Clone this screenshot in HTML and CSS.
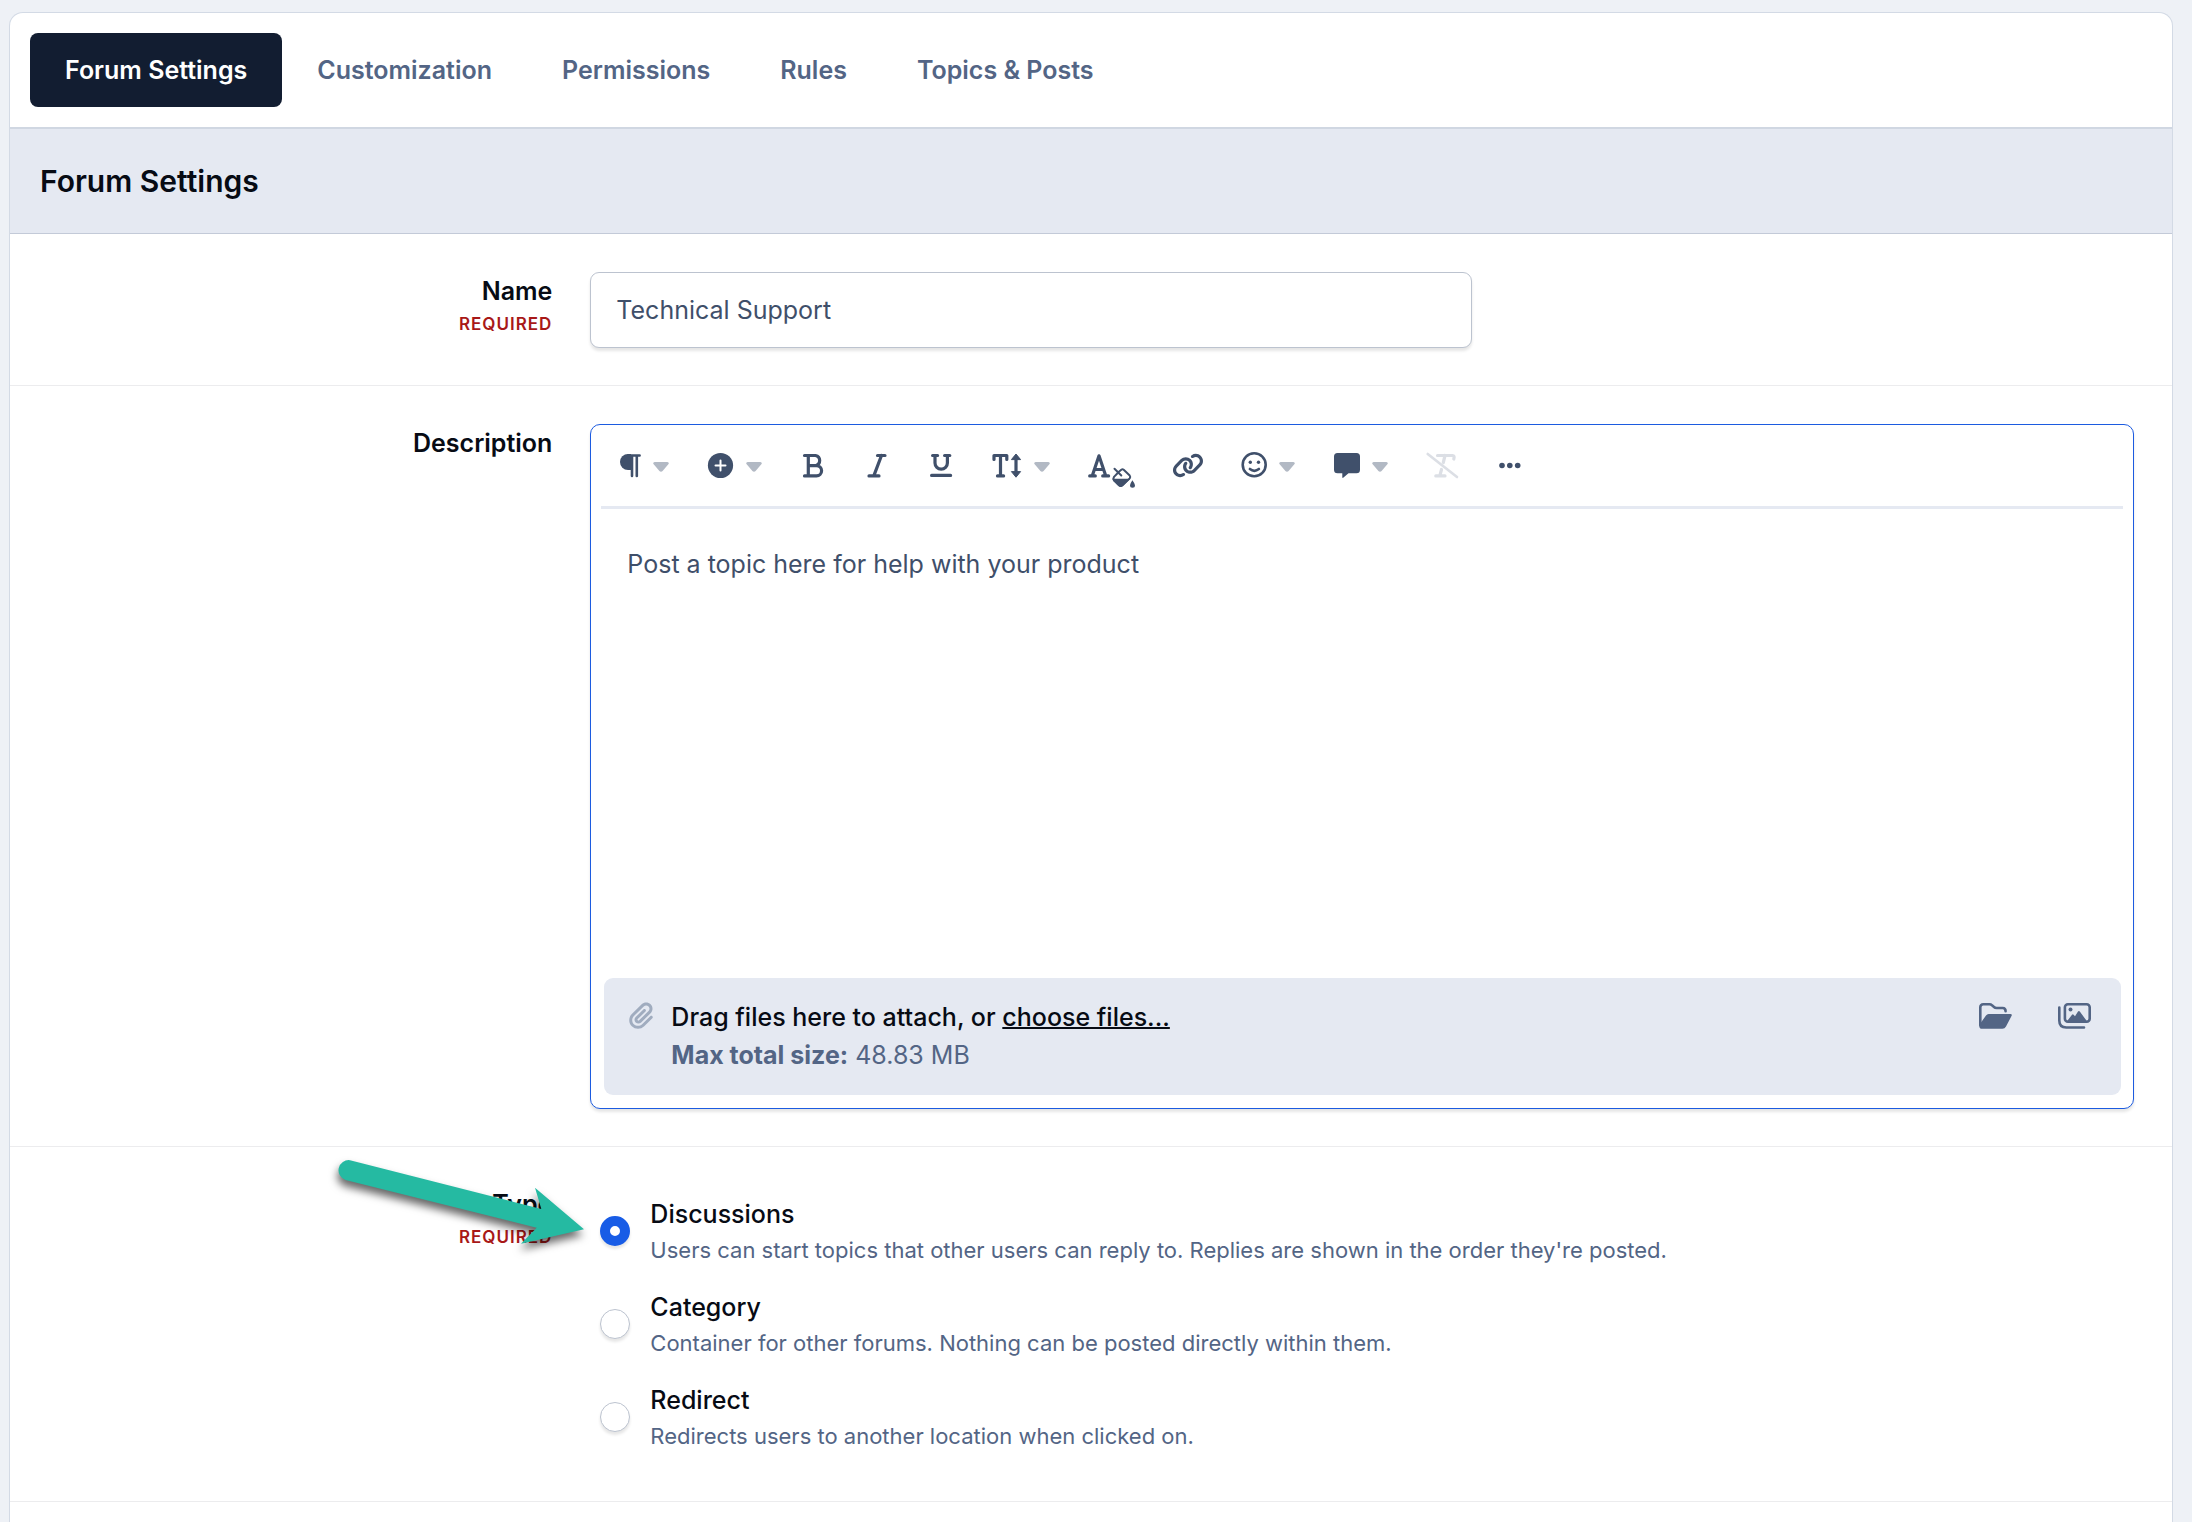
FILE: index.html
```html
<!DOCTYPE html>
<html lang="en">
<head>
<meta charset="utf-8">
<meta name="viewport" content="width=device-width, initial-scale=1">
<title>Forum Settings</title>
<link rel="stylesheet" href="styles.css">
</head>
<body>
<svg class="sprite" aria-hidden="true">
  <symbol id="caret" viewBox="0 0 16 47"><path d="M1.6 20h12.8q2.200.7.9 2.300L9.600 29q-1.600 1.600-3.200 0L.7 22.300Q-.6 20.700 1.600 20z"/></symbol>
</svg>
<form class="card">
  <nav class="tabs" aria-label="Sections">
    <a class="tab tab-active" href="#settings">Forum Settings</a>
    <a class="tab" href="#customization">Customization</a>
    <a class="tab" href="#permissions">Permissions</a>
    <a class="tab" href="#rules">Rules</a>
    <a class="tab" href="#topics">Topics &amp; Posts</a>
  </nav>
  <h1 class="section-title" id="settings">Forum Settings</h1>

  <div class="row">
    <div class="row-label">
      <label for="name">Name</label>
      <span class="required">REQUIRED</span>
    </div>
    <div class="row-field">
      <input class="text-input" id="name" type="text" value="Technical Support" required>
    </div>
  </div>

  <div class="row">
    <div class="row-label"><label for="description">Description</label></div>
    <div class="row-field">
      <div class="editor">
        <div class="toolbar" role="toolbar" aria-label="Formatting">
          <button class="tool" type="button" aria-label="Paragraph">
            <svg class="icon" width="21" height="47" viewBox="0 0 21 47"><path d="M11 12H8a8 8 0 0 0 0 16h3z"/><path class="line" d="M8 13.500H19.600M12 13.500V34M16.800 13.500V34"/></svg>
            <svg class="caret" width="16" height="47"><use href="#caret"/></svg>
          </button>
          <button class="tool" type="button" aria-label="Insert">
            <svg class="icon" width="27" height="47" viewBox="0 0 27 47"><circle cx="13.500" cy="23.500" r="12.600"/><path class="line knockout" d="M13.500 18.500v10M8.500 23.500h10"/></svg>
            <svg class="caret" width="16" height="47"><use href="#caret"/></svg>
          </button>
          <button class="tool" type="button" aria-label="Bold">
            <svg class="icon" width="26" height="47" viewBox="0 0 26 47"><path class="line slab" d="M4.500 13.500H15.500a5.200 5.200 0 0 1 0 10.200H8.300M15.500 23.700h1a5 5 0 0 1 0 10.200H4.500M8.300 13.500V33.900"/></svg>
          </button>
          <button class="tool" type="button" aria-label="Italic">
            <svg class="icon" width="26" height="47" viewBox="0 0 26 47"><path class="line slab" d="M13.500 13.500H21M5 33.900H15M17.500 13.500L9.800 33.900"/></svg>
          </button>
          <button class="tool" type="button" aria-label="Underline">
            <svg class="icon" width="26" height="47" viewBox="0 0 26 47"><path class="line slab" d="M4.600 13.500H9.600M16.600 13.500H21.800M7 13.500V21a6.200 6.200 0 0 0 12.400 0V13.500M3.600 33.400H22.600"/></svg>
          </button>
          <button class="tool" type="button" aria-label="Text size">
            <svg class="icon" width="30" height="47" viewBox="0 0 30 47"><path class="line slab" d="M2 17.500V13.500H14.800V17.500M8.500 13.500V33.900M5.500 33.900H11.600M24 16V31"/><path d="M24 12l4.600 5.600h-9.200zM24 35.200l4.600-5.600h-9.200z" stroke="currentColor" stroke-width="1" stroke-linejoin="round"/></svg>
            <svg class="caret" width="16" height="47"><use href="#caret"/></svg>
          </button>
          <button class="tool" type="button" aria-label="Colors">
            <svg class="icon" width="47" height="47" viewBox="0 0 47 47"><path class="line slab" d="M4.200 33.900L11 13.800 17.800 33.900M6.500 27.500H15.500M1.700 33.900H7.300M14.700 33.900H20.600"/><path d="M24.800 36.700H42.400L34.600 44.300Q32.700 45.800 30.800 44.300L25.600 39.300Q24.500 38 24.800 36.700z"/><path class="line thin" d="M26.500 26.700L33.300 33.500M30.300 30.200L33.300 27.700Q34.500 26.800 35.700 27.700L41.700 33.500Q42.800 35 41.700 36.400L34.500 43.300Q32.700 44.700 31 43.300L26 38.300Q24.800 36.700 26 34.900L29.500 31.200"/><path d="M44.400 38.300q2.600 3.500 2.600 5a2.500 2.500 0 0 1-5 0q0-1.500 2.400-5z"/></svg>
          </button>
          <button class="tool" type="button" aria-label="Link">
            <svg class="icon" width="30" height="47" viewBox="0 0 30 47"><path transform="translate(-.9 10.800) scale(.0497)" d="M579.800 267.700c56.500-56.500 56.500-148 0-204.500c-50-50-128.800-56.500-186.300-15.400l-1.600 1.100c-14.400 10.300-17.700 30.300-7.400 44.600s30.300 17.700 44.600 7.400l1.600-1.100c32.100-22.900 76-19.300 103.800 8.600c31.500 31.500 31.500 82.500 0 114L422.300 334.800c-31.500 31.500-82.500 31.500-114 0c-27.900-27.900-31.500-71.800-8.600-103.800l1.100-1.600c10.300-14.400 6.900-34.400-7.400-44.600s-34.400-6.900-44.600 7.400l-1.100 1.600C206.500 251.200 213 330 263 380c56.500 56.500 148 56.500 204.500 0L579.800 267.700zM60.200 244.300c-56.500 56.500-56.500 148 0 204.500c50 50 128.800 56.500 186.300 15.400l1.600-1.100c14.400-10.300 17.700-30.300 7.400-44.600s-30.300-17.700-44.600-7.400l-1.600 1.100c-32.100 22.900-76 19.300-103.800-8.600C74 372 74 321 105.500 289.500L217.700 177.200c31.500-31.500 82.500-31.500 114 0c27.900 27.900 31.500 71.800 8.600 103.900l-1.100 1.600c-10.300 14.400-6.900 34.400 7.400 44.600s34.400 6.900 44.600-7.400l1.100-1.600C433.500 260.800 427 182 377 132c-56.500-56.500-148-56.500-204.500 0L60.200 244.300z"/></svg>
          </button>
          <button class="tool" type="button" aria-label="Emoji">
            <svg class="icon" width="26" height="47" viewBox="0 0 26 47"><circle class="line" cx="13.200" cy="22.700" r="11.500"/><circle cx="9.300" cy="20.300" r="1.700"/><circle cx="17.500" cy="20.300" r="1.700"/><path class="line" d="M8.900 27q4.400 3.600 9 0"/></svg>
            <svg class="caret" width="16" height="47"><use href="#caret"/></svg>
          </button>
          <button class="tool" type="button" aria-label="Quote">
            <svg class="icon" width="27" height="47" viewBox="0 0 27 47"><path d="M4.500 11H23.500Q27 11 27 14.500V27.800Q27 31.300 23.500 31.300H15.500L10.200 35.800Q9.300 36.200 9.300 35V31.300H4.500Q1 31.300 1 27.800V14.500Q1 11 4.500 11z"/></svg>
            <svg class="caret" width="16" height="47"><use href="#caret"/></svg>
          </button>
          <button class="tool" type="button" aria-label="Clear formatting" disabled>
            <svg class="icon" width="32" height="47" viewBox="0 0 32 47"><path class="line" d="M1.700 12L31 35"/><path class="line slab" d="M11.500 13.500H26.500Q28.800 13.500 27.800 17M19 13.500L17.300 20.500M15.500 27.500L13.800 33.900M9.800 33.900H19"/></svg>
          </button>
          <button class="tool" type="button" aria-label="More options">
            <svg class="icon" width="28" height="47" viewBox="0 0 28 47"><circle cx="6" cy="23.500" r="2.800"/><circle cx="13.800" cy="23.500" r="2.800"/><circle cx="21.700" cy="23.500" r="2.800"/></svg>
          </button>
        </div>
        <textarea class="editor-text" id="description">Post a topic here for help with your product</textarea>
        <div class="attach">
          <svg class="clip" width="24" height="27" viewBox="0 0 448 512" preserveAspectRatio="none" aria-hidden="true"><path d="M364.200 83.800c-24.400-24.400-64-24.400-88.400 0l-184 184c-42.100 42.100-42.100 110.300 0 152.400s110.300 42.100 152.400 0l152-152c10.900-10.900 28.700-10.900 39.600 0s10.900 28.700 0 39.600l-152 152c-64 64-167.600 64-231.600 0s-64-167.600 0-231.600l184-184c46.300-46.300 121.300-46.300 167.600 0s46.300 121.300 0 167.600l-176 176c-28.600 28.600-75 28.600-103.600 0s-28.600-75 0-103.600l144-144c10.900-10.900 28.700-10.900 39.600 0s10.900 28.700 0 39.600l-144 144c-6.700 6.700-6.700 17.700 0 24.400s17.700 6.700 24.400 0l176-176c24.400-24.400 24.400-64 0-88.400z"/></svg>
          <div class="attach-text">
            <p class="attach-title">Drag files here to attach, or <a href="#choose">choose files...</a></p>
            <p class="attach-size"><strong>Max total size:</strong> 48.83 MB</p>
          </div>
          <div class="attach-tools">
            <button class="tool" type="button" aria-label="Browse existing files">
              <svg class="icon" width="33" height="26" viewBox="0 0 33 26"><path class="line" d="M1.300 22V4.300Q1.300 1.300 4.300 1.300H10.500q1.500 0 2.500 1l2 1.700q1 1 2.600 1H23.700Q26.600 5 26.600 8.200"/><path d="M9.600 11H31.400q2 0 1.200 1.800L27 23.500Q25.800 25.800 23.300 25.800H3Q0 25.800.2 22L7 12.500Q8 11 9.600 11z"/></svg>
            </button>
            <button class="tool" type="button" aria-label="Insert other media">
              <svg class="icon" width="33" height="26" viewBox="0 0 33 26"><path class="line" d="M1.300 4.500V17.500q0 7 7 7H26"/><rect class="line" x="6.900" y="1.300" width="24.800" height="17.400" rx="3"/><circle cx="12.500" cy="6.600" r="2"/><path d="M9 18.300L14 11.800q.8-.9 1.600 0L17 13.300 20 8.600q.9-1.200 1.800 0L29 18.300z"/></svg>
            </button>
          </div>
        </div>
      </div>
    </div>
  </div>

  <div class="row">
    <div class="row-label" id="type-label">
      <span>Type</span>
      <span class="required">REQUIRED</span>
      <svg class="arrow" width="270" height="110" viewBox="330 1150 270 110" aria-hidden="true"><path d="M350 1160.200L541.300 1209 535 1187.700 584 1229.300 521 1243.700 536.700 1227.700 345.500 1180A10.200 10.200 0 0 1 350 1160.200z"/></svg>
    </div>
    <div class="row-field options" role="radiogroup" aria-labelledby="type-label">
      <label class="option">
        <input class="radio" type="radio" name="type" checked>
        <span class="option-text"><span class="option-title">Discussions</span><span class="option-note">Users can start topics that other users can reply to. Replies are shown in the order they're posted.</span></span>
      </label>
      <label class="option">
        <input class="radio" type="radio" name="type">
        <span class="option-text"><span class="option-title">Category</span><span class="option-note">Container for other forums. Nothing can be posted directly within them.</span></span>
      </label>
      <label class="option">
        <input class="radio" type="radio" name="type">
        <span class="option-text"><span class="option-title">Redirect</span><span class="option-note">Redirects users to another location when clicked on.</span></span>
      </label>
    </div>
  </div>
</form>
</body>
</html>
```
FILE: styles.css
```css
* { box-sizing: border-box; }

body {
  margin: 0;
  min-height: 100vh;
  padding: 12px 19px 0 9px;
  display: flex;
  flex-direction: column;
  background: #eef1f6;
  color: #070b14;
  font: 400 25px/36px Inter, "Liberation Sans", sans-serif;
}

.sprite { position: absolute; width: 0; height: 0; }

.card {
  flex: 1;
  border: 1px solid #d3dae5;
  border-bottom: 0;
  border-radius: 14px 14px 0 0;
  background: #fff;
}

.tabs {
  display: flex;
  flex-wrap: wrap;
  padding: 20px;
  border-bottom: 2px solid #d0d7e2;
}
.tab {
  padding: 19px 35px;
  border-radius: 8px;
  color: #536585;
  font-weight: 600;
  text-decoration: none;
}
.tab-active { background: #121d31; color: #fff; }

.section-title {
  margin: 0;
  padding: 34px 30px;
  border-bottom: 1px solid #c3cad8;
  background: #e5e9f2;
  font-size: 30px;
  font-weight: 600;
  line-height: 36px;
}

.row {
  display: grid;
  grid-template-columns: 26fr 74fr;
  column-gap: 38px;
  padding: 38px 38px 37px 0;
  border-bottom: 1px solid #ececee;
}
.row-label {
  position: relative;
  display: flex;
  flex-direction: column;
  align-items: flex-end;
  font-weight: 600;
  line-height: 38px;
}
.required {
  color: #a81818;
  font-size: 17px;
  line-height: 28px;
  letter-spacing: 1px;
}

.text-input {
  display: block;
  width: 100%;
  max-width: 882px;
  height: 76px;
  padding: 0 25px;
  border: 1px solid #bcc3cf;
  border-radius: 9px;
  background: #fff;
  box-shadow: 0 3px 3px rgba(0, 0, 0, .1);
  color: #3f4f6a;
  font: inherit;
}

.editor {
  border: 1px solid #1c5be0;
  border-radius: 10px;
  background: #fff;
  box-shadow: 0 3px 3px rgba(0, 0, 0, .1);
}
.toolbar {
  display: flex;
  flex-wrap: wrap;
  gap: 0 38px;
  margin: 0 10px;
  padding: 17px 19px;
  border-bottom: 3px solid #e5e9f2;
}
.tool {
  display: flex;
  gap: 12px;
  padding: 0;
  border: 0;
  background: none;
  color: #40506b;
}
.tool:disabled { color: #dcdfe5; }
.icon { display: block; fill: currentColor; overflow: visible; }
.caret { display: block; fill: #b2b9c4; }
.line {
  fill: none;
  stroke: currentColor;
  stroke-width: 2.6;
  stroke-linecap: round;
  stroke-linejoin: round;
}
.slab { stroke-width: 3.2; }
.thin { stroke-width: 2; }
.knockout { stroke: #fff; stroke-width: 2; }

.editor-text {
  display: block;
  width: 100%;
  height: 469px;
  padding: 37px 36px;
  border: 0;
  outline: 0;
  resize: none;
  background: none;
  color: #3f4f6a;
  font: inherit;
}

.attach {
  display: flex;
  align-items: flex-start;
  gap: 18px;
  margin: 0 12px 13px 13px;
  padding: 20px 30px 21px 25px;
  border-radius: 9px;
  background: #e5e9f2;
}
.clip { margin-top: 4px; fill: #a0acbf; }
.attach-text { flex: 1; line-height: 38px; }
.attach-title, .attach-size { margin: 0; }
.attach-title { font-weight: 500; }
.attach-title a {
  color: inherit;
  text-decoration-thickness: 2px;
}
.attach-size { color: #536585; }
.attach-size strong { font-weight: 700; }
.attach-tools { display: flex; gap: 46px; margin-top: 5px; }
.attach-tools .tool { color: #536585; }

.options {
  display: flex;
  flex-direction: column;
  gap: 19px;
  padding: 9px 10px 10px;
}
.option { display: flex; align-items: center; gap: 20px; }
.option-text { display: flex; flex-direction: column; padding-top: 2px; }
.option-title { font-weight: 500; }
.option-note { color: #536585; font-size: 22px; }

.radio {
  appearance: none;
  flex: none;
  width: 30px;
  height: 30px;
  margin: 0;
  border: 1px solid #bcc3cf;
  border-radius: 50%;
  background: #fff;
  box-shadow: 0 3px 3px rgba(0, 0, 0, .1);
}
.radio:checked { border: 10px solid #185ce6; }

/* Pointer laid over the label, aimed at the selected option */
.arrow {
  position: absolute;
  top: -35px;
  right: -48px;
  overflow: visible;
  fill: #25baa2;
  filter: drop-shadow(-1px 6px 4px rgba(0, 0, 0, .6));
}
```
